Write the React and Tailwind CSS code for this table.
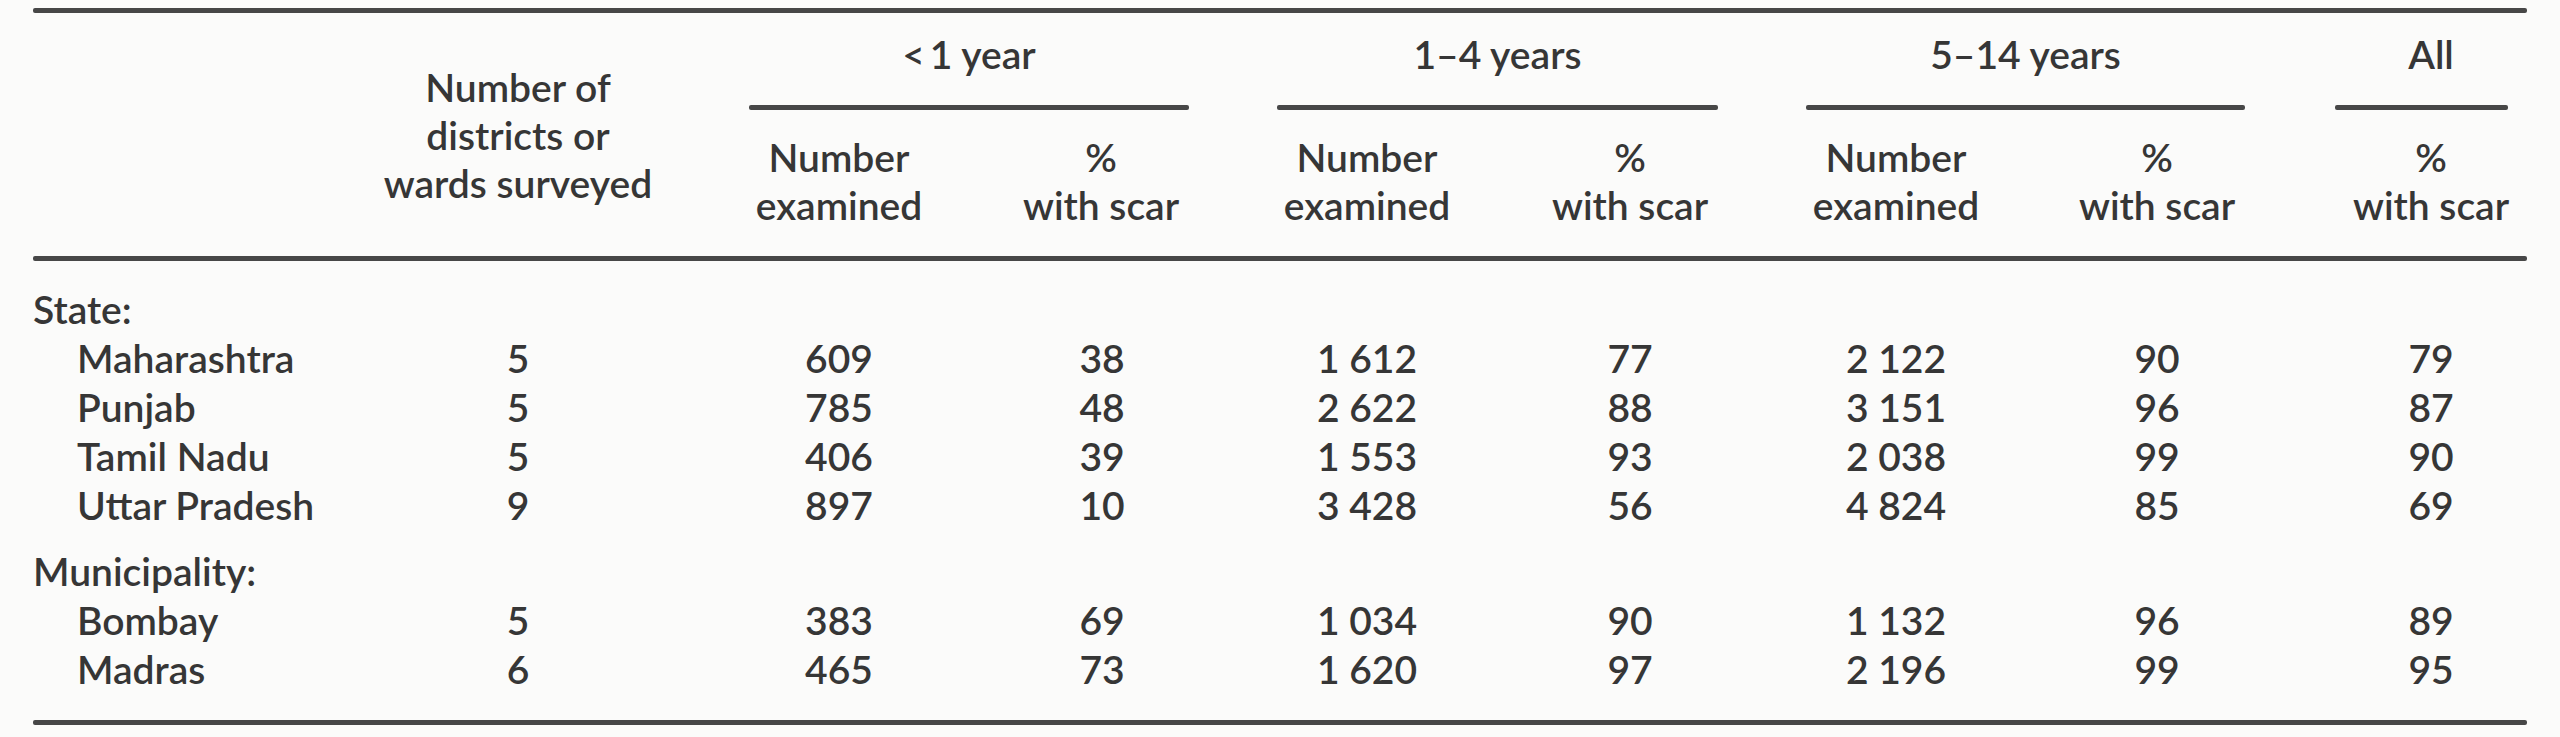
const rows = [
  { type: 'section', label: 'State:' },
  { label: 'Maharashtra', d: '5', a: ['609', '38'], b: ['1 612', '77'], c: ['2 122', '90'], all: '79' },
  { label: 'Punjab', d: '5', a: ['785', '48'], b: ['2 622', '88'], c: ['3 151', '96'], all: '87' },
  { label: 'Tamil Nadu', d: '5', a: ['406', '39'], b: ['1 553', '93'], c: ['2 038', '99'], all: '90' },
  { label: 'Uttar Pradesh', d: '9', a: ['897', '10'], b: ['3 428', '56'], c: ['4 824', '85'], all: '69' },
  { type: 'section', label: 'Municipality:', gap: true },
  { label: 'Bombay', d: '5', a: ['383', '69'], b: ['1 034', '90'], c: ['1 132', '96'], all: '89' },
  { label: 'Madras', d: '6', a: ['465', '73'], b: ['1 620', '97'], c: ['2 196', '99'], all: '95' },
];

function Rule({ className = '' }) {
  return <div className={`h-[5px] rounded-[2px] bg-[#474747] ${className}`} />;
}

function SubHead({ first, second, className }) {
  return (
    <div className={`${className} text-center`}>
      <div>{first}</div>
      <div>{second}</div>
    </div>
  );
}

function GroupHead({ title, width, ml }) {
  return (
    <div className={`${ml} ${width} flex flex-col pt-[17px]`}>
      <div className="text-center">{title}</div>
      <Rule className="mt-[27px]" />
      <div className="mt-[23px] flex justify-between">
        <SubHead first="Number" second="examined" className="w-[180px]" />
        <SubHead first="%" second="with scar" className="w-[176px]" />
      </div>
    </div>
  );
}

function DataRow({ row }) {
  if (row.type === 'section') {
    return <div className={`h-[49px] ${row.gap ? 'mt-[17px]' : ''}`}>{row.label}</div>;
  }
  return (
    <div className="flex h-[49px] tabular-nums">
      <div className="w-[335px] pl-[44px]">{row.label}</div>
      <div className="w-[300px] text-center">{row.d}</div>
      <div className="ml-[81px] flex w-[440px] justify-between">
        <div className="w-[180px] text-center">{row.a[0]}</div>
        <div className="w-[174px] text-center">{row.a[1]}</div>
      </div>
      <div className="ml-[88px] flex w-[441px] justify-between">
        <div className="w-[180px] text-center">{row.b[0]}</div>
        <div className="w-[176px] text-center">{row.b[1]}</div>
      </div>
      <div className="ml-[88px] flex w-[439px] justify-between">
        <div className="w-[180px] text-center">{row.c[0]}</div>
        <div className="w-[176px] text-center">{row.c[1]}</div>
      </div>
      <div className="ml-[90px] w-[192px] text-center">{row.all}</div>
    </div>
  );
}

export default function App() {
  return (
    <div className="h-[737px] w-[2560px] bg-[#fbfbfa] pl-[33px] pt-[8px] font-['Lato',sans-serif] text-[39px] font-semibold leading-[49px] text-[#363636]">
      <div className="w-[2494px]">
        <Rule />

        {/* header */}
        <div className="flex h-[243px] leading-[48px]">
          <div className="w-[335px]" />
          <div className="w-[300px] pt-[50px] text-center">
            <div>Number of</div>
            <div>districts or</div>
            <div>wards surveyed</div>
          </div>
          <GroupHead title={'<\u20091 year'} width="w-[440px]" ml="ml-[81px]" />
          <GroupHead title="1–4 years" width="w-[441px]" ml="ml-[88px]" />
          <GroupHead title="5–14 years" width="w-[439px]" ml="ml-[88px]" />
          <div className="ml-[90px] flex w-[192px] flex-col pt-[17px]">
            <div className="text-center">All</div>
            <Rule className="mr-[19px] mt-[27px]" />
            <SubHead first="%" second="with scar" className="mt-[23px]" />
          </div>
        </div>

        <Rule />

        <div className="pt-[24px] pb-[26px]">
          {rows.map((row, i) => (
            <DataRow key={i} row={row} />
          ))}
        </div>

        <Rule />
      </div>
    </div>
  );
}
